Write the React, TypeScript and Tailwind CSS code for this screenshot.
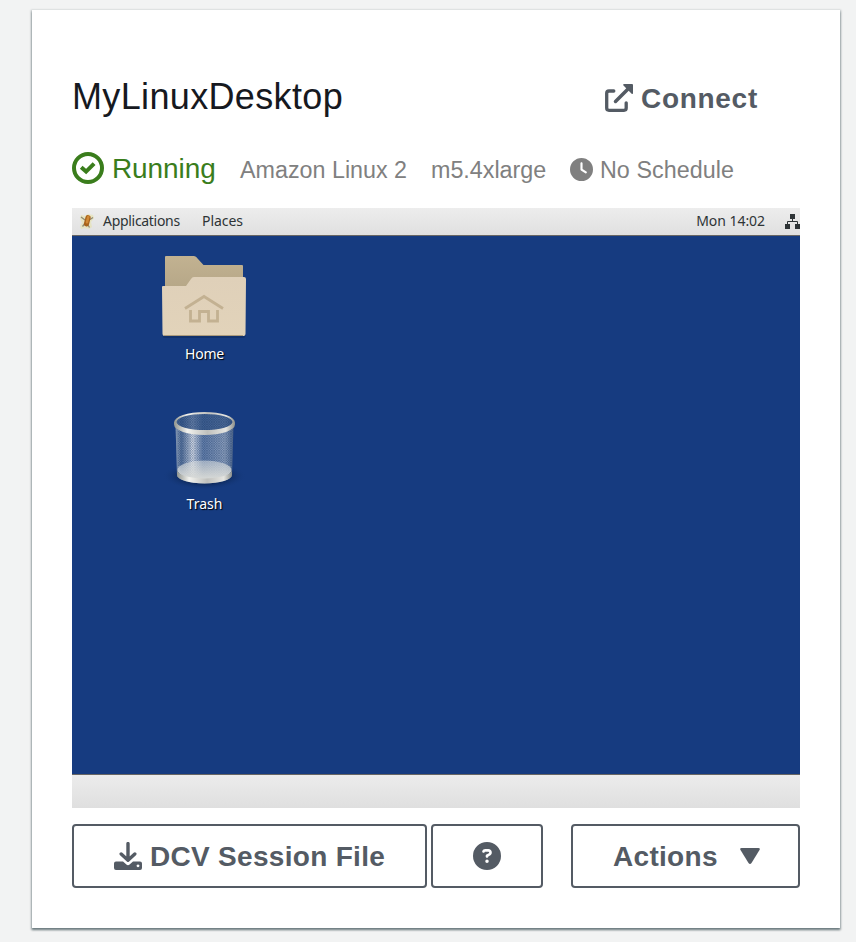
import { FaClock, FaCircleQuestion } from 'react-icons/fa6';

function StatusIcon() {
  return (
    <svg className="h-8 w-8 shrink-0" viewBox="0 0 32 32" fill="none" stroke="currentColor">
      <circle cx="16" cy="16" r="14" strokeWidth="4" />
      <path d="M9.200 15.200l4.900 4.400 8-8" strokeWidth="4" />
    </svg>
  );
}

function ExternalIcon() {
  return (
    <svg className="h-7 w-7 shrink-0" viewBox="0 0 28 28" fill="none" stroke="currentColor" strokeLinecap="round">
      <path d="M8.800 7H4Q1.700 7 1.700 9.200v14.900q0 2.200 2.300 2.200h15q2.200 0 2.200-2.200v-5.300" strokeWidth="3.300" />
      <path d="M10.500 17.500L23 5" strokeWidth="3.500" />
      <path d="M19.300 0H27q1 0 1 1v7.700q0 2-1.600.7l-7.900-7.800q-1.200-1.600.8-1.600z" fill="currentColor" stroke="none" />
    </svg>
  );
}

function DownloadIcon() {
  return (
    <svg className="h-7 w-7 shrink-0" viewBox="0 0 28 28" fill="none" stroke="currentColor" strokeLinecap="round" strokeLinejoin="round">
      <path d="M14 1.600V17M7.200 12l6.800 6.300 6.800-6.300" strokeWidth="3.400" />
      <path
        d="M2 19.500h7l3.400 3q1.600 1.300 3.200 0l3.400-3h7q2 0 2 2V26q0 2-2 2H2q-2 0-2-2v-4.500q0-2 2-2zM24 22.400a1.400 1.400 0 1 0 .01 0z"
        fill="currentColor"
        fillRule="evenodd"
        stroke="none"
      />
    </svg>
  );
}

function FootIcon() {
  return (
    <svg className="mr-[9px] mb-px h-4 w-[14px]" viewBox="0 0 14 16">
      <path d="M1 2l4 1 3-2 5 1 1 3-3 4 1 5-3 2-4-1-4 1-1-3 2-3-2-5z" fill="#e5e3b4" opacity=".7" />
      <path d="M1 4l4 3M13 4.500l-3 2M4.500 11l-2 2.500M8 12l1.500 2.500" stroke="#8f8a73" strokeWidth="1.300" />
      <rect x="4.600" y="2" width="5.200" height="11.500" rx="2.500" transform="rotate(14 7 8)" fill="#a8631b" />
      <rect x="6" y="2.500" width="2.600" height="8" rx="1.300" transform="rotate(14 7 8)" fill="#d08936" />
    </svg>
  );
}

function NetworkIcon() {
  return (
    <svg className="ml-5 h-[15px] w-[15px] shrink-0" viewBox="0 0 15 15" fill="#2e3436">
      <path d="M5 0h5v5H5zM0 10h5v5H0zM10 10h5v5h-5z" />
      <path d="M7.500 4v3.500M2.500 11V7.500h10V11" fill="none" stroke="#2e3436" />
    </svg>
  );
}

function FolderIcon() {
  return (
    <svg className="h-[86px] w-[90px]" viewBox="0 0 90 86">
      <defs>
        <linearGradient id="folderBack" x1="0" y1="0" x2="0" y2="1">
          <stop offset="0" stopColor="#c2b291" />
          <stop offset="1" stopColor="#b5a687" />
        </linearGradient>
        <linearGradient id="folderFront" x1="0" y1="0" x2="0" y2="1">
          <stop offset="0" stopColor="#dfd0b9" />
          <stop offset="1" stopColor="#e2d3ba" />
        </linearGradient>
      </defs>
      <rect x="3.500" y="80" width="83" height="6" rx="2" fill="#102c61" opacity=".65" />
      <path d="M6 34V5q0-1 1-1h28q2 0 4 3l5.500 6H83q1 0 1 1v25z" fill="url(#folderBack)" />
      <path d="M3 35q0-1 1-1h23l5-7q1-2 3-2h50q2 0 2 2l-.5 55q0 2-2 2h-79q-2 0-2-2z" fill="url(#folderFront)" />
      <path d="M5 83.500h79" stroke="#ab9a7c" strokeWidth="1" />
      <path d="M26 56.500l19-12 19 12" fill="none" stroke="#c3b192" strokeWidth="2.800" />
      <path d="M31.500 58v11h9v-9.500h9V69h9V58" fill="none" stroke="#c3b192" strokeWidth="2.800" />
    </svg>
  );
}

function TrashIcon() {
  return (
    <svg className="h-[84px] w-[90px]" viewBox="0 0 90 84">
      <defs>
        <linearGradient id="glass" x1="0" x2="1" y1="0" y2="0">
          <stop offset="0" stopColor="#c5cfda" stopOpacity=".8" />
          <stop offset=".1" stopColor="#6a83a4" stopOpacity=".75" />
          <stop offset=".3" stopColor="#fff" stopOpacity=".85" />
          <stop offset=".48" stopColor="#8fa5c3" stopOpacity=".65" />
          <stop offset=".85" stopColor="#bac6d5" stopOpacity=".75" />
          <stop offset=".95" stopColor="#7488a5" stopOpacity=".8" />
          <stop offset="1" stopColor="#53698b" />
        </linearGradient>
        <linearGradient id="rim" x1="0" x2="1" y1="0" y2="0">
          <stop offset="0" stopColor="#91958f" />
          <stop offset=".22" stopColor="#f2f2ee" />
          <stop offset=".55" stopColor="#bfc0bd" />
          <stop offset=".85" stopColor="#e5e5e1" />
          <stop offset="1" stopColor="#8b8f8b" />
        </linearGradient>
        <linearGradient id="floor" x1="0" x2="0" y1="0" y2="1">
          <stop offset="0" stopColor="#e1e4e3" stopOpacity=".5" />
          <stop offset="1" stopColor="#d8dad7" />
        </linearGradient>
        <radialGradient id="shade">
          <stop offset="0" stopColor="#071a3b" stopOpacity=".9" />
          <stop offset=".6" stopColor="#0b2451" stopOpacity=".6" />
          <stop offset="1" stopColor="#163b80" stopOpacity="0" />
        </radialGradient>
        <pattern id="mesh" width="2.400" height="2.400" patternUnits="userSpaceOnUse">
          <path d="M0 0l2.400 2.400M2.400 0L0 2.400" stroke="#173664" strokeWidth=".45" />
        </pattern>
      </defs>
      <ellipse cx="45.500" cy="66" rx="42" ry="14" fill="url(#shade)" />
      <path d="M16.500 14L18 65a27.500 8.500 0 0 0 55 0l1.500-51z" fill="url(#glass)" />
      <path d="M16.500 14L18 65a27.500 8.500 0 0 0 55 0l1.500-51z" fill="url(#mesh)" opacity=".65" />
      <ellipse cx="45.500" cy="60" rx="27" ry="9.500" fill="url(#floor)" />
      <path d="M18 60a27.500 8.500 0 0 0 55 0v5a27.500 8.500 0 0 1-55 0z" fill="url(#rim)" />
      <ellipse cx="45.500" cy="12.500" rx="29" ry="9" fill="#284c84" />
      <ellipse cx="45.500" cy="12.500" rx="29" ry="9" fill="url(#glass)" opacity=".35" />
      <ellipse cx="45.500" cy="12.500" rx="29" ry="9" fill="url(#mesh)" opacity=".7" />
      <path
        fillRule="evenodd"
        d="M15 12.500a30.500 10.500 0 0 1 61 0v2a30.500 10.500 0 0 1-61 0zM17.500 12a28 8 0 0 0 56 0a28 8 0 0 0-56 0z"
        fill="url(#rim)"
      />
    </svg>
  );
}

const buttonBase =
  'flex h-16 items-center rounded-[4px] border-2 border-[#545b64] bg-white text-[28px] font-bold leading-none tracking-[0.3px] text-[#545b64]';

export default function App() {
  return (
    <main className="h-[942px] w-[856px] overflow-hidden bg-[#f2f3f3] pt-[10px] pl-8 font-['Liberation_Sans',Arial,sans-serif]">
      <section className="h-[918px] w-[808px] bg-white px-10 pt-[60px] shadow-[0_1px_2px_1px_rgba(0,28,36,0.25),0_2px_2px_0_rgba(0,28,36,0.4)]">
        <header className="flex h-[54px] items-center justify-between pr-[41px]">
          <h1 className="text-[36px] leading-[54px] tracking-[0.35px] text-[#16191f]">MyLinuxDesktop</h1>
          <button className="mt-0.5 flex items-center gap-2 text-[28px] font-bold leading-8 tracking-[0.7px] text-[#545b64]">
            <ExternalIcon />
            <span className="mt-0.5 w-[118px] text-left">Connect</span>
          </button>
        </header>

        <div className="mt-[20px] flex h-12 items-center text-[23.3px] leading-8 whitespace-nowrap text-[#808080]">
          <div className="flex w-[144px] items-center gap-2 text-[28px] text-[#3a7d1c]">
            <StatusIcon />
            <span className="pt-0.5 tracking-[-0.1px]">Running</span>
          </div>
          <span className="ml-6 mt-1 w-[167px]">Amazon Linux 2</span>
          <span className="ml-6 mt-1 w-[115px]">m5.4xlarge</span>
          <FaClock className="ml-6 mt-[3px] h-[23px] w-[23px]" />
          <span className="ml-[7px] mt-1 tracking-[0.05px]">No Schedule</span>
        </div>

        <div className="mt-[16px] flex h-[600px] w-[728px] flex-col overflow-hidden bg-[#163b80] font-['Noto_Sans','Open_Sans',sans-serif] text-[14px]">
          <div className="flex h-7 shrink-0 items-center border-b border-[#686664] bg-linear-to-b from-[#ededed] to-[#e0e0e0] pl-2 text-[#2e3436]">
            <FootIcon />
            <span className="mb-0.5 w-[98px] tracking-[-0.3px]">Applications</span>
            <span className="mb-0.5 ml-px tracking-[-0.05px]">Places</span>
            <span className="mb-0.5 ml-auto tracking-[-0.05px]">Mon 14:02</span>
            <NetworkIcon />
          </div>
          <div className="flex flex-1 flex-col pt-[16px] pl-[87px] text-white">
            <div className="flex h-[158px] w-[90px] flex-col items-center">
              <FolderIcon />
              <span className="mt-[6px] ml-px leading-5 tracking-[-0.2px] [text-shadow:1px_1px_1px_#000]">Home</span>
            </div>
            <div className="flex w-[90px] flex-col items-center">
              <TrashIcon />
              <span className="ml-px leading-5 [text-shadow:1px_1px_1px_#000]">Trash</span>
            </div>
          </div>
          <div className="h-[34px] shrink-0 border-t border-[#686664] bg-linear-to-b from-[#ececec] to-[#dfdfdf]" />
        </div>

        <div className="mt-4 flex">
          <button className={`${buttonBase} w-[355px] gap-2 pl-10`}>
            <DownloadIcon />
            <span className="pt-0.5">DCV Session File</span>
          </button>
          <button aria-label="Help" className={`${buttonBase} ml-1 w-[112px] justify-center`}>
            <FaCircleQuestion className="h-7 w-7" />
          </button>
          <button className={`${buttonBase} ml-7 w-[229px] pl-10`}>
            <span className="w-[106px] pt-0.5 text-left">Actions</span>
            <svg className="ml-[21px] h-4 w-5" viewBox="0 0 20 16" fill="currentColor">
              <path d="M1.500 0h17q2 0 1 2l-8 13q-1.500 2-3 0L.5 2Q-.5 0 1.500 0z" />
            </svg>
          </button>
        </div>
      </section>
    </main>
  );
}
